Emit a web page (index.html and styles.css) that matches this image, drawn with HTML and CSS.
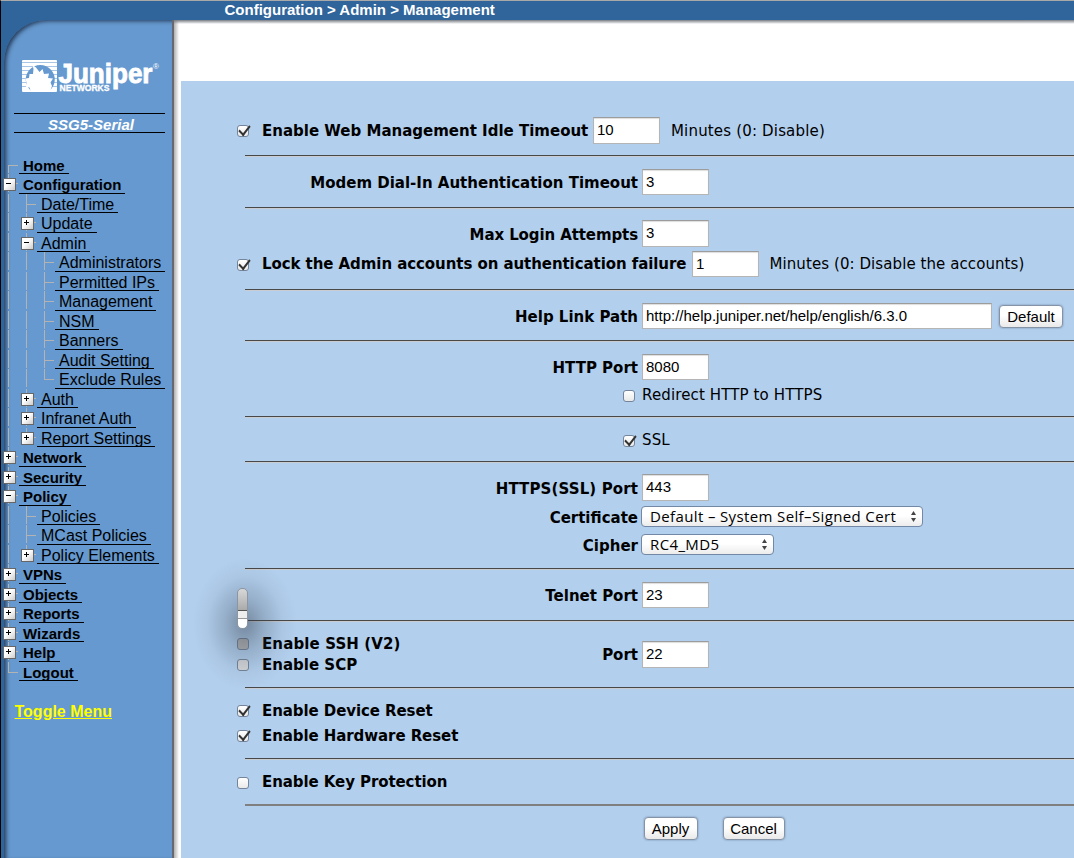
FILE: index.html
```html
<!DOCTYPE html>
<html lang="en">
<head>
<meta charset="utf-8">
<title>Configuration &gt; Admin &gt; Management</title>
<link rel="stylesheet" href="styles.css">
</head>
<body>
<header class="topbar">Configuration &gt; Admin &gt; Management</header>
<div class="layout">
<aside class="sidebar">
<div class="panel">
<svg class="logo" width="146" height="40" viewBox="0 0 146 40">
  <rect x="1" y="0" width="35" height="32" rx="1" fill="#fff"/>
  <path d="M1 2.500h35M1 6.500h35M1 10.500h35M1 14.500h35M1 18.500h35M1 22.500h35M1 26.500h35" stroke="#a9c6e6" stroke-width="1"/>
  <path d="M10.500 31A14.500 14.500 0 1 1 28 31z" fill="#6699cf"/>
  <path d="M10 32L8.500 27.500 5 27 5.500 23 4.500 18.500 8 18 8.500 14 12 14 12.500 9 11.500 5 15 7.500 18.500 12 21.500 9 23 14 28 13.500 27 18 32 18.500 29.500 22.500 31 26 29 32z" fill="#fff"/>
  <text class="wordmark" x="37.500" y="23" textLength="94" lengthAdjust="spacingAndGlyphs">Juniper</text>
  <text class="networks" x="38.500" y="31" textLength="50" lengthAdjust="spacingAndGlyphs">NETWORKS</text>
  <text class="reg" x="132" y="9">®</text>
</svg>
<div class="device">SSG5-Serial</div>
<nav class="tree">
<div class="item top"><i class="first"></i><a>Home</a></div>
<div class="item top"><i class="box"></i><a>Configuration</a></div>
<div class="item"><i class="bar"></i><i class="tee"></i><a>Date/Time</a></div>
<div class="item"><i class="bar"></i><i class="box plus"></i><a>Update</a></div>
<div class="item"><i class="bar"></i><i class="box"></i><a>Admin</a></div>
<div class="item"><i class="bar"></i><i class="bar"></i><i class="tee"></i><a>Administrators</a></div>
<div class="item"><i class="bar"></i><i class="bar"></i><i class="tee"></i><a>Permitted IPs</a></div>
<div class="item"><i class="bar"></i><i class="bar"></i><i class="tee"></i><a>Management</a></div>
<div class="item"><i class="bar"></i><i class="bar"></i><i class="tee"></i><a>NSM</a></div>
<div class="item"><i class="bar"></i><i class="bar"></i><i class="tee"></i><a>Banners</a></div>
<div class="item"><i class="bar"></i><i class="bar"></i><i class="tee"></i><a>Audit Setting</a></div>
<div class="item"><i class="bar"></i><i class="bar"></i><i class="last"></i><a>Exclude Rules</a></div>
<div class="item"><i class="bar"></i><i class="box plus"></i><a>Auth</a></div>
<div class="item"><i class="bar"></i><i class="box plus"></i><a>Infranet Auth</a></div>
<div class="item"><i class="bar"></i><i class="box plus end"></i><a>Report Settings</a></div>
<div class="item top"><i class="box plus"></i><a>Network</a></div>
<div class="item top"><i class="box plus"></i><a>Security</a></div>
<div class="item top"><i class="box"></i><a>Policy</a></div>
<div class="item"><i class="bar"></i><i class="tee"></i><a>Policies</a></div>
<div class="item"><i class="bar"></i><i class="tee"></i><a>MCast Policies</a></div>
<div class="item"><i class="bar"></i><i class="box plus end"></i><a>Policy Elements</a></div>
<div class="item top"><i class="box plus"></i><a>VPNs</a></div>
<div class="item top"><i class="box plus"></i><a>Objects</a></div>
<div class="item top"><i class="box plus"></i><a>Reports</a></div>
<div class="item top"><i class="box plus"></i><a>Wizards</a></div>
<div class="item top"><i class="box plus"></i><a>Help</a></div>
<div class="item top"><i class="last"></i><a>Logout</a></div>
</nav>
<a class="toggle">Toggle Menu</a>
</div>
</aside>
<main class="main">
<form class="form">
<section class="s1">
  <div class="row tall"><span class="check on"></span><b class="w-idle">Enable Web Management Idle Timeout</b><span class="field">10</span><span class="note">Minutes (0: Disable)</span></div>
</section>
<section class="s2">
  <div class="row"><b class="label">Modem Dial-In Authentication Timeout</b><span class="field">3</span></div>
</section>
<section class="s3">
  <div class="row tall"><b class="label login">Max Login Attempts</b><span class="field">3</span></div>
  <div class="row gap4"><span class="check on"></span><b class="w-lock">Lock the Admin accounts on authentication failure</b><span class="field">1</span><span class="note long">Minutes (0: Disable the accounts)</span></div>
</section>
<section class="s4">
  <div class="row"><b class="label">Help Link Path</b><span class="field wide">http://help.juniper.net/help/english/6.3.0</span><span class="button default">Default</span></div>
</section>
<section class="s5">
  <div class="row"><b class="label">HTTP Port</b><span class="field">8080</span></div>
  <div class="row h30 inset"><span class="check"></span><span class="opt">Redirect HTTP to HTTPS</span></div>
</section>
<section class="s6">
  <div class="row h22 inset"><span class="check on"></span><span class="opt">SSL</span></div>
</section>
<section class="s7">
  <div class="row tall"><b class="label https">HTTPS(SSL) Port</b><span class="field">443</span></div>
  <div class="row h32"><b class="label">Certificate</b><span class="select cert"><span>Default – System Self–Signed Cert</span><svg width="7" height="11" viewBox="0 0 7 11"><path d="M3.500 0L6 4H1zM3.500 11L6 7H1z" fill="#444"/></svg></span></div>
  <div class="row h24"><b class="label">Cipher</b><span class="select cipher"><span>RC4_MD5</span><svg width="7" height="11" viewBox="0 0 7 11"><path d="M3.500 0L6 4H1zM3.500 11L6 7H1z" fill="#444"/></svg></span></div>
</section>
<section class="s8">
  <div class="row"><b class="label">Telnet Port</b><span class="field">23</span></div>
  <div class="ghost"><span></span></div>
</section>
<section class="s9">
  <div class="pair">
    <div class="row h21"><span class="check dim2"></span><b class="ssh">Enable SSH (V2)</b></div>
    <div class="row h21"><span class="check dim"></span><b>Enable SCP</b></div>
  </div>
  <div class="row tall"><b class="label port">Port</b><span class="field">22</span></div>
</section>
<section class="s10">
  <div class="row h25"><span class="check on"></span><b>Enable Device Reset</b></div>
  <div class="row h25"><span class="check on"></span><b>Enable Hardware Reset</b></div>
</section>
<section class="s11">
  <div class="row h22"><span class="check"></span><b>Enable Key Protection</b></div>
</section>
<div class="actions"><span class="button apply">Apply</span><span class="button cancel">Cancel</span></div>
</form>
</main>
</div>
</body>
</html>
```
FILE: styles.css
```css
* { box-sizing: border-box; }
body {
  margin: 0;
  width: 1074px;
  height: 858px;
  overflow: hidden;
  background: #2f659b;
  font-family: "Liberation Sans", Arial, sans-serif;
  color: #000;
}
.topbar {
  height: 20px;
  padding-left: 223.5px;
  border-top: 1px solid #a9a9a9;
  border-left: 1px solid #000;
  background: #2f659b;
  color: #fff;
  font-weight: bold;
  font-size: 15px;
  line-height: 18px;
}
.layout { display: flex; height: 838px; }

/* sidebar */
.sidebar {
  width: 174px;
  padding-left: 3px;
  border-left: 1px solid #000;
  background: #2f659b;
}
.panel {
  height: 838px;
  border-top-left-radius: 42px;
  border-right: 2px solid #66696f;
  background: #6699cf;
  box-shadow: inset 3px 2px 4px -1px rgba(20, 35, 60, .8);
}
.logo { display: block; position: relative; top: 40px; margin-left: 17px; overflow: visible; }
.wordmark { font: bold 28px "Liberation Sans", Arial, sans-serif; fill: #fff; stroke: #fff; stroke-width: .9; }
.networks { font: bold 8.5px "Liberation Sans", Arial, sans-serif; fill: #fff; stroke: #fff; stroke-width: .3; }
.reg { font: 8px "Liberation Sans", Arial, sans-serif; fill: #fff; }
.device {
  width: 151px;
  height: 20px;
  margin: 53px 0 0 10px;
  border-top: 1px solid #000;
  border-bottom: 1px solid #000;
  color: #fff;
  font: italic bold 15px/21px "Liberation Sans", Arial, sans-serif;
  text-align: center;
  padding-left: 3px;
}
.tree { margin: 21.5px 0 0 -4px; }
.item { display: flex; height: 19.5px; font-size: 16px; }
.item a {
  height: 19.5px;
  margin-left: 1px;
  padding: 0 4px;
  border-bottom: 1px solid #000;
  line-height: 22px;
  white-space: nowrap;
}
.item.top a { font-size: 15px; font-weight: bold; }
.item i { flex: none; position: relative; width: 18px; height: 19.5px; }
.item i::before {
  content: "";
  position: absolute;
  left: 8px;
  top: 0;
  width: 1px;
  height: 18px;
  background: #b3b3b3;
}
.item .first::before { top: 10px; height: 8px; }
.item .last::before { height: 10px; }
.item .end::before { height: 10px; }
.item .first, .item .tee, .item .last { background: linear-gradient(#b3b3b3, #b3b3b3) 8px 10px / 10px 1px no-repeat; }
.item .box { background: linear-gradient(#b3b3b3, #b3b3b3) 14px 9px / 4px 1px no-repeat; }
.item .box::after {
  content: "";
  position: absolute;
  left: 3px;
  top: 4px;
  width: 11px;
  height: 11px;
  border: 1px solid #666;
  background:
    linear-gradient(#000, #000) 2px 4px / 5px 1px no-repeat,
    linear-gradient(135deg, #fff 40%, #ccc);
}
.item .plus::after {
  background:
    linear-gradient(#000, #000) 2px 4px / 5px 1px no-repeat,
    linear-gradient(#000, #000) 4px 2px / 1px 5px no-repeat,
    linear-gradient(135deg, #fff 40%, #ccc);
}
.toggle {
  display: inline-block;
  margin: 22px 0 0 10.5px;
  color: #ff0;
  font-size: 16px;
  font-weight: bold;
  text-decoration: underline;
}

/* main */
.main {
  flex: 1;
  padding: 61px 0 0 7px;
  background:
    linear-gradient(#777c84, rgba(255, 255, 255, 0)) 0 0 / 100% 4px no-repeat,
    linear-gradient(90deg, #b0b0b0, #fff 5px) #fff;
}
.form {
  height: 777px;
  background: #b2cfed;
  font: 15px "DejaVu Sans", Verdana, sans-serif;
}
section {
  position: relative;
  padding-left: 56px;
}
section::after {
  content: "";
  position: absolute;
  left: 64px;
  right: 0;
  bottom: 0;
  height: 2px;
  background: linear-gradient(#484848 1px, #c9cdd2 1px);
}
.s1 { height: 76px; padding-top: 36px; }
.s2 { height: 52px; padding-top: 12px; }
.s3 { height: 82px; padding-top: 11px; }
.s4 { height: 51px; padding-top: 12px; }
.s5 { height: 76px; padding-top: 12px; }
.s6 { height: 45px; padding-top: 11px; }
.s7 { height: 107px; padding-top: 11px; }
.s8 { height: 52px; padding-top: 12px; }
.s9 { height: 67px; padding-top: 11px; display: flex; }
.s10 { height: 71px; padding-top: 9px; }
.s11 { height: 46px; padding-top: 11px; }
.s11::after { background: #808080; }
.row { display: flex; align-items: center; height: 26px; white-space: nowrap; }
.tall { height: 27px; }
.gap4 { margin-top: 4px; }
.h21 { height: 21px; }
.h22 { height: 22px; }
.h24 { height: 24px; }
.h25 { height: 25px; }
.h30 { height: 30px; }
.h32 { height: 32px; }
.label { width: 401px; margin-right: 4px; text-align: right; position: relative; top: .5px; }
.login { letter-spacing: -.1px; top: 1px; }
.https { letter-spacing: .12px; top: 1px; }
.ssh { letter-spacing: .12px; }
.w-idle { width: 331px; }
.w-lock { width: 430px; letter-spacing: -.07px; }
.s9 .pair { width: 200px; }
.s9 .tall { margin-top: 8px; }
.s10 b, .s11 b { letter-spacing: -.08px; }
.port { width: 201px; }
.inset { padding-left: 386px; }
.inset .check { margin-right: 7px; }
.opt { letter-spacing: .13px; }
.note { margin-left: 11px; letter-spacing: .17px; }
.long { margin-left: 10.5px; letter-spacing: .08px; }
.field {
  width: 67px;
  height: 100%;
  padding-left: 3px;
  border: 1px solid #b5b5b5;
  border-top-color: #9c9c9c;
  background: #fff;
  box-shadow: inset 0 1px 1px #ddd;
  font: 15px/24px "Liberation Sans", Arial, sans-serif;
}
.wide { width: 350px; }
.check {
  position: relative;
  flex: none;
  width: 12px;
  height: 12px;
  margin-right: 13px;
  top: .5px;
  border: 1px solid #74859b;
  border-radius: 3px;
  background: linear-gradient(#fff, #e9e9e9);
}
.on::after {
  content: "";
  position: absolute;
  left: 3px;
  top: -3px;
  width: 5px;
  height: 10px;
  border: solid #333;
  border-width: 0 2px 2px 0;
  transform: rotate(38deg) skewY(8deg);
}
.dim { background: #d4d6d9; }
.dim2 { background: #b4b6b8; }
.button {
  height: 23px;
  border: 1px solid #8593a6;
  border-radius: 4px;
  background: linear-gradient(#fff 45%, #e9e9e9);
  box-shadow: 0 0 2px #6f87a6;
  font: 15px/21px "Liberation Sans", Arial, sans-serif;
  text-align: center;
}
.default { width: 64px; margin-left: 7px; }
.select {
  display: flex;
  align-items: center;
  justify-content: space-between;
  height: 21px;
  margin: -1px 0 0 -1px;
  padding: 0 5px 0 8px;
  border: 1px solid #7288a4;
  border-radius: 4px;
  background: linear-gradient(#fff 45%, #ececec);
  font: 15px/19px "Open Sans", sans-serif;
  letter-spacing: .37px;
}
.cert { width: 282px; }
.cipher { width: 133px; }
.actions { display: flex; gap: 25px; padding: 11px 0 0 462.5px; }
.apply { width: 54px; }
.cancel { width: 62px; }

/* stray scroller with its drop shadow, lying over the form */
.ghost {
  position: absolute;
  z-index: 2;
  left: 8px;
  top: -26px;
  width: 110px;
  height: 146px;
  background: radial-gradient(ellipse 52px 66px at 56px 80px, rgba(50, 60, 75, .48), rgba(50, 60, 75, .24) 36%, rgba(50, 60, 75, .06) 72%, transparent);
}
.ghost span {
  position: absolute;
  left: 48px;
  top: 44px;
  width: 11px;
  height: 41px;
  border: 1px solid #8b96a3;
  border-radius: 5px;
  background: linear-gradient(#d8d8d8, #aaa 21px, #555 21px, #555 22px, #eee 22px, #eee 29px, #999 29px, #999 30px, #fff 30px);
}
```
